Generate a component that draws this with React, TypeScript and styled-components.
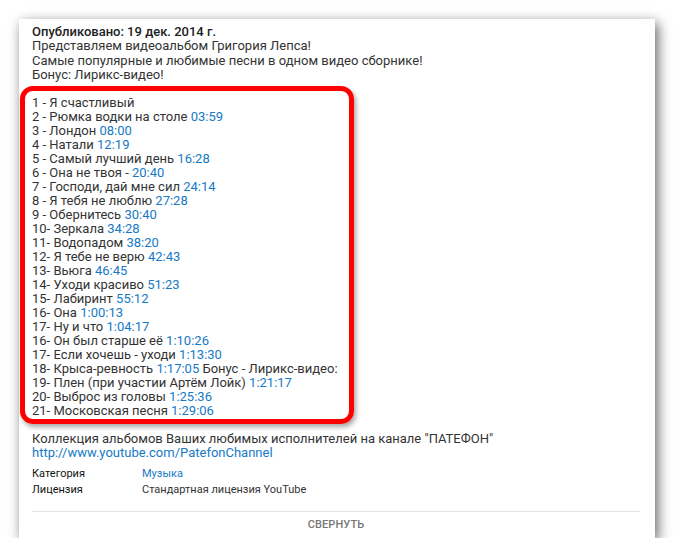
import React from "react";
import styled, { createGlobalStyle } from "styled-components";

const GlobalStyle = createGlobalStyle`
  html, body {
    margin: 0;
    padding: 0;
    background: #ffffff;
  }
  body {
    font-family: Roboto, "Noto Sans", Arial, sans-serif;
    -webkit-font-smoothing: antialiased;
  }
`;

const Page = styled.div`
  padding: 19px 0 0 19px;
`;

const Card = styled.div`
  width: 636px;
  height: 519px;
  box-sizing: border-box;
  background: #fff;
  padding: 6px 15px 0 13px;
  box-shadow: 3px 4px 12px rgba(0, 0, 0, 0.6);
  display: flex;
  flex-direction: column;
`;

const Text = styled.div`
  font-size: 13px;
  line-height: 14.3px;
  color: #333;
`;

const Published = styled.strong`
  font-weight: 500;
  color: #222;
`;

const Highlight = styled.div`
  margin: 4px 0 0 -12px;
  width: 334px;
  box-sizing: border-box;
  border: 5px solid #ff0000;
  border-radius: 13px;
  padding: 5px 7px 1px;
  box-shadow: 2px 3px 5px rgba(0, 0, 0, 0.35);
`;

const Track = styled.div`
  font-size: 13px;
  line-height: 14px;
  color: #333;
  white-space: nowrap;
`;

const Link = styled.a`
  color: #167ac6;
  text-decoration: none;
`;

const Footer = styled(Text)`
  margin-top: 8px;
`;

const Meta = styled.div`
  margin-top: 5px;
  display: grid;
  grid-template-columns: 110px 1fr;
  font-size: 11px;
  line-height: 16px;
  color: #333;
`;

const MetaLabel = styled.div`
  color: #111;
`;

const Divider = styled.div`
  margin-top: 13px;
  height: 1px;
  background: #e2e2e2;
`;

const Collapse = styled.button`
  border: 0;
  background: none;
  font-family: inherit;
  font-size: 11px;
  font-weight: 500;
  color: #767676;
  letter-spacing: 0.1px;
  height: 27px;
  padding: 0;
  cursor: pointer;
`;

const tracks: [string, string][] = [
  ["1 - Я счастливый", ""],
  ["2 - Рюмка водки на столе ", "03:59"],
  ["3 - Лондон ", "08:00"],
  ["4 - Натали ", "12:19"],
  ["5 - Самый лучший день ", "16:28"],
  ["6 - Она не твоя - ", "20:40"],
  ["7 - Господи, дай мне сил ", "24:14"],
  ["8 - Я тебя не люблю ", "27:28"],
  ["9 - Обернитесь ", "30:40"],
  ["10- Зеркала ", "34:28"],
  ["11- Водопадом ", "38:20"],
  ["12- Я тебе не верю ", "42:43"],
  ["13- Вьюга ", "46:45"],
  ["14- Уходи красиво ", "51:23"],
  ["15- Лабиринт ", "55:12"],
  ["16- Она ", "1:00:13"],
  ["17- Ну и что ", "1:04:17"],
  ["16- Он был старше её ", "1:10:26"],
  ["17- Если хочешь - уходи ", "1:13:30"],
  ["18- Крыса-ревность ", "1:17:05"],
  ["19- Плен (при участии Артём Лойк) ", "1:21:17"],
  ["20- Выброс из головы ", "1:25:36"],
  ["21- Московская песня ", "1:29:06"],
];

export default function App() {
  return (
    <Page>
      <GlobalStyle />
      <Card>
        <Text>
          <Published>Опубликовано: 19 дек. 2014 г.</Published>
          <br />
          Представляем видеоальбом Григория Лепса!
          <br />
          Самые популярные и любимые песни в одном видео сборнике!
          <br />
          Бонус: Лирикс-видео!
        </Text>
        <Highlight>
          {tracks.map(([title, time], i) => (
            <Track key={i}>
              {title}
              {time && <Link href="#">{time}</Link>}
              {i === 19 && " Бонус - Лирикс-видео:"}
            </Track>
          ))}
        </Highlight>
        <Footer>
          Коллекция альбомов Ваших любимых исполнителей на канале "ПАТЕФОН"
          <br />
          <Link href="#">http://www.youtube.com/PatefonChannel</Link>
        </Footer>
        <Meta>
          <MetaLabel>Категория</MetaLabel>
          <div>
            <Link href="#">Музыка</Link>
          </div>
          <MetaLabel>Лицензия</MetaLabel>
          <div>Стандартная лицензия YouTube</div>
        </Meta>
        <Divider />
        <Collapse>СВЕРНУТЬ</Collapse>
      </Card>
    </Page>
  );
}
